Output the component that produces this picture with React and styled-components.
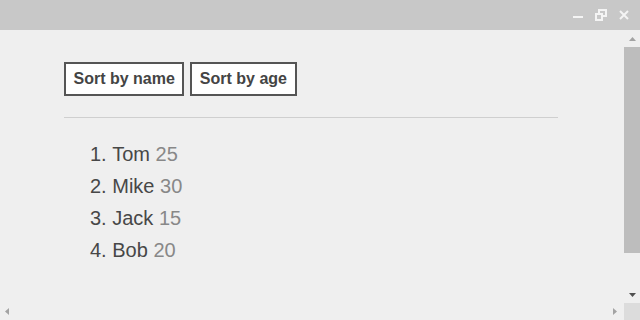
import React from 'react'
import styled, { createGlobalStyle } from 'styled-components'

const GlobalStyle = createGlobalStyle`
    html, body {
        margin: 0;
        padding: 0;
        background: #efefef;
    }
    body {
        font-family: "Liberation Sans", Arial, sans-serif;
    }
`;

const people = [
    { name: 'Tom', age: 25 },
    { name: 'Mike', age: 30 },
    { name: 'Jack', age: 15 },
    { name: 'Bob', age: 20 },
];

const Window = styled.div`
    width: 640px;
    height: 320px;
    display: flex;
    flex-direction: column;
    background: #efefef;
    overflow: hidden;
`;

const TitleBar = styled.div`
    height: 30px;
    flex: none;
    background: #c8c8c8;
    display: flex;
    justify-content: flex-end;
    align-items: center;
    padding-right: 10px;
    gap: 11px;
    box-sizing: border-box;
`;

const WinButton = styled.div`
    width: 12px;
    height: 12px;
    display: flex;
    align-items: center;
    justify-content: center;
`;

const Body = styled.div`
    flex: 1;
    display: grid;
    grid-template-columns: 1fr 16px;
    grid-template-rows: 1fr 17px;
    min-height: 0;
`;

const Content = styled.div`
    padding: 32px 66px 0 64px;
    overflow: hidden;
`;

const Toolbar = styled.div`
    display: flex;
    gap: 6px;
`;

const SortButton = styled.button`
    height: 34px;
    padding: 0 7.5px;
    border: 2px solid #555;
    background: #fff;
    color: #444;
    font-family: "Liberation Sans", Arial, sans-serif;
    font-size: 16px;
    font-weight: bold;
    cursor: pointer;
`;

const Divider = styled.hr`
    border: none;
    border-top: 1px solid #cfcfcf;
    margin: 21px 0 20px;
`;

const List = styled.ol`
    margin: 0;
    padding-left: 26px;
    list-style-position: inside;
    color: #474747;
    font-size: 20px;
    line-height: 32px;
`;

const Age = styled.span`
    color: #888;
`;

const VScroll = styled.div`
    display: flex;
    flex-direction: column;
    align-items: stretch;
`;

const Arrow = styled.div`
    height: 17px;
    flex: none;
    display: flex;
    align-items: center;
    justify-content: center;
`;

const Thumb = styled.div`
    height: 206px;
    background: #bdbdbd;
`;

const Track = styled.div`
    flex: 1;
`;

const HScroll = styled.div`
    display: flex;
    justify-content: space-between;
    align-items: center;
    padding: 0 7px 0 5px;
`;

const Corner = styled.div`
    background: #dcdcdc;
`;

const Tri = ({ dir, color = '#a3a3a3' }) => {
    const pts = {
        up: '0,4 3.5,0 7,4',
        down: '0,0 3.5,4 7,0',
        left: '4,0 0,3.5 4,7',
        right: '0,0 4,3.5 0,7',
    }[dir]
    const vertical = dir === 'up' || dir === 'down'
    return (
        <svg width={vertical ? 7 : 4} height={vertical ? 4 : 7}>
            <polygon points={pts} fill={color} />
        </svg>
    )
}

const App = () => {
    return (
        <Window>
            <GlobalStyle />
            <TitleBar>
                <WinButton>
                    <svg width="10" height="12"><rect x="0" y="7" width="10" height="2" fill="#f4f4f4" /></svg>
                </WinButton>
                <WinButton>
                    <svg width="12" height="12" fill="none" stroke="#f4f4f4" strokeWidth="2">
                        <rect x="1" y="5" width="6" height="6" />
                        <path d="M4 4V1h7v6H8" />
                    </svg>
                </WinButton>
                <WinButton>
                    <svg width="10" height="12" stroke="#f4f4f4" strokeWidth="2">
                        <path d="M1 2l8 8M9 2l-8 8" />
                    </svg>
                </WinButton>
            </TitleBar>
            <Body>
                <Content>
                    <Toolbar>
                        <SortButton>Sort by name</SortButton>
                        <SortButton>Sort by age</SortButton>
                    </Toolbar>
                    <Divider />
                    <List>
                        {people.map((p) => (
                            <li key={p.name}>{p.name} <Age>{p.age}</Age></li>
                        ))}
                    </List>
                </Content>
                <VScroll>
                    <Arrow><Tri dir="up" /></Arrow>
                    <Thumb />
                    <Track />
                    <Arrow><Tri dir="down" color="#505050" /></Arrow>
                </VScroll>
                <HScroll>
                    <Tri dir="left" />
                    <Tri dir="right" />
                </HScroll>
                <Corner />
            </Body>
        </Window>
    )
}

export default App
